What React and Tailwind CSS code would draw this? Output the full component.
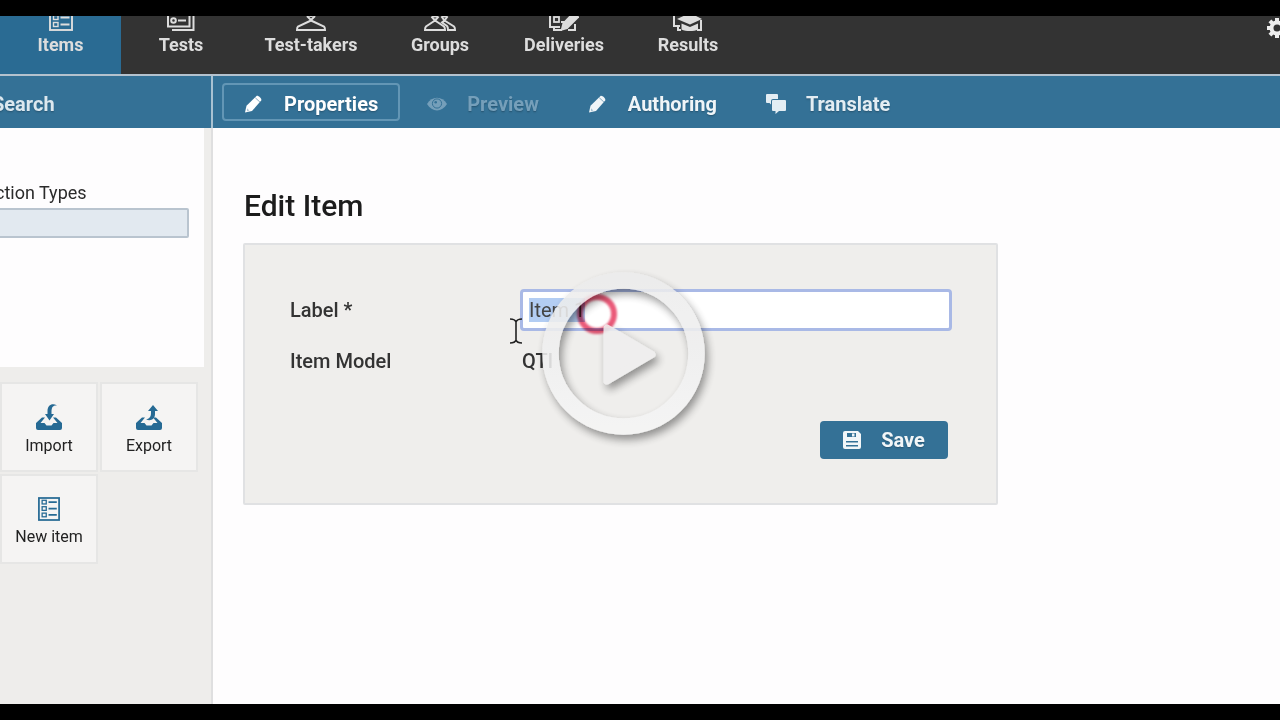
import { useEffect, useRef } from "react";

function ListIcon({ className }) {
  return (
    <svg viewBox="0 0 24 26" className={className} fill="none" stroke="currentColor" strokeWidth="1.900" aria-hidden="true">
      <rect x="1" y="1" width="22" height="24" />
      <rect x="4.500" y="3.500" width="4.500" height="4" strokeWidth="1.400" />
      <rect x="4.500" y="10.500" width="4.500" height="4" strokeWidth="1.400" />
      <rect x="4.500" y="17.500" width="4.500" height="4" strokeWidth="1.400" />
      <path d="M11.500 5.500h9M11.500 12.500h9M11.500 19.500h9" />
    </svg>
  );
}

function TestsIcon({ className }) {
  return (
    <svg viewBox="0 0 28 26" className={className} fill="none" stroke="currentColor" strokeWidth="2" aria-hidden="true">
      <path d="M1 0V21.500H22.500V0ZM5 25H26.500V3" />
      <rect x="4.500" y="3" width="4" height="4" strokeWidth="1.600" />
      <circle cx="6.500" cy="15.500" r="2.300" />
      <path d="M11 5h8M11 15.500h8" />
    </svg>
  );
}

function TakerIcon({ className }) {
  return (
    <svg viewBox="0 0 30 26" className={className} fill="none" stroke="currentColor" strokeWidth="2" aria-hidden="true">
      <circle cx="15" cy="6" r="5" />
      <path d="M11 11l4.500 4.500M19 11l-4.500 4.500" />
      <path d="M15 15.500 2 21.500q-1 1-1 3.500h28q0-2.500-1-3.500L15 15.500" />
    </svg>
  );
}

function GroupsIcon({ className }) {
  return (
    <svg viewBox="0 0 32 26" className={className} fill="none" stroke="currentColor" strokeWidth="2" aria-hidden="true">
      <circle cx="11" cy="7" r="4.500" />
      <path d="M7.500 11.500l3.500 4M14.500 11.500l-3.500 4" />
      <path d="M11 15.500 2 21.500q-1 1-1 3.500h20q0-2.500-1-3.500L11 15.500" />
      <circle cx="20.500" cy="7" r="4.500" />
      <path d="M17.500 11.500l3 4 3-4M20.500 15.500l9.500 6q1 1 1 3.500h-7q0-3-1-4l-5-3.500Z" />
    </svg>
  );
}

function DeliveriesIcon({ className }) {
  return (
    <svg viewBox="0 0 30 26" className={className} fill="none" stroke="currentColor" strokeWidth="2" aria-hidden="true">
      <path d="M1 0V22H11M5 22v3h8M19 25h7v-6" />
      <rect x="5" y="12" width="5" height="5" strokeWidth="1.800" />
      <path d="M12 17h4" />
      <path d="M11.500 26l2-8L25 6l5.500 6L18.500 24Z" fill="currentColor" stroke="none" />
    </svg>
  );
}

function ResultsIcon({ className }) {
  return (
    <svg viewBox="0 0 30 26" className={className} fill="none" stroke="currentColor" strokeWidth="2" aria-hidden="true">
      <path d="M1 0V21H7M5 21v4h3M24 25h4V15" />
      <path d="M4 14 17 8l12 6-12 5.500Z" fill="currentColor" stroke="none" />
      <path d="M8.500 18.500 17 22l8-3.500v6c-4 2-12 2-16.500 0Z" fill="currentColor" stroke="none" />
    </svg>
  );
}

function GearIcon({ className }) {
  return (
    <svg viewBox="0 0 22 22" className={className} aria-hidden="true">
      <g fill="currentColor">
        <path d="M9 1h4v20H9z" />
        <path d="M1 9h20v4H1z" />
        <path d="M9 1h4v20H9z" transform="rotate(45 11 11)" />
        <path d="M1 9h20v4H1z" transform="rotate(45 11 11)" />
        <circle cx="11" cy="11" r="7.500" />
      </g>
      <circle cx="11" cy="11" r="3.500" fill="#333333" />
    </svg>
  );
}

function PencilIcon({ className }) {
  return (
    <svg viewBox="0 0 20 20" className={className} fill="currentColor" aria-hidden="true">
      <path d="M12.500 2c1.500-1 5.700 2.700 4.700 4.400L8 17 1 18.500l1.500-6.700Z" />
      <path d="M11.300 3.800l4.600 4.200" stroke="#347196" strokeWidth="0.600" />
      <path d="M3 14.300l2.300 2.300-2.300.6Z" fill="#347196" opacity="0.400" />
    </svg>
  );
}

function EyeIcon({ className }) {
  return (
    <svg viewBox="0 0 20 14" className={className} aria-hidden="true">
      <path d="M0 7C5-1.500 15-1.500 20 7 15 15.500 5 15.500 0 7Z" fill="currentColor" />
      <circle cx="10" cy="6.500" r="4.600" fill="none" stroke="#347196" strokeWidth="1" />
      <circle cx="8.700" cy="5.200" r="1.300" fill="#347196" />
    </svg>
  );
}

function BubblesIcon({ className }) {
  return (
    <svg viewBox="0 0 20 20" className={className} fill="currentColor" aria-hidden="true">
      <path d="M1 0h10a1 1 0 0 1 1 1v4H7a2 2 0 0 0-2 2v3.500L3.500 9H1a1 1 0 0 1-1-1V1a1 1 0 0 1 1-1Z" />
      <path d="M7 6h12a1 1 0 0 1 1 1v9a1 1 0 0 1-1 1h-6l-3.500 3v-3H7a1 1 0 0 1-1-1V7a1 1 0 0 1 1-1Z" />
    </svg>
  );
}

function SaveIcon({ className }) {
  return (
    <svg viewBox="0 0 18 18" className={className} aria-hidden="true">
      <path d="M2 0h13l3 3v13a2 2 0 0 1-2 2H2a2 2 0 0 1-2-2V2a2 2 0 0 1 2-2Z" fill="currentColor" />
      <path d="M4 2h9v4H4zM3 10h12v1.400H3zM3 14h12v1.600H3z" fill="#347196" />
      <path d="M9 2.500h2.500v3H9z" fill="currentColor" />
    </svg>
  );
}

function Tray() {
  return <path d="M6 13.500 0 19v5a2 2 0 0 0 2 2h22a2 2 0 0 0 2-2v-5L20 13.500h-3l4.500 5.500h-4l-2 2.500h-5L8.500 19h-4L9 13.500Z" />;
}

function ImportIcon({ className }) {
  return (
    <svg viewBox="0 0 26 26" className={className} fill="currentColor" aria-hidden="true">
      <Tray />
      <path d="M21 1.500c-4-.5-5.500 1.500-5.500 6.500v2H18L13.500 16.500 9 10h2.500V7c0-5.500 4.500-8.500 9.500-5.500Z" />
    </svg>
  );
}

function ExportIcon({ className }) {
  return (
    <svg viewBox="0 0 26 26" className={className} fill="currentColor" aria-hidden="true">
      <Tray />
      <path d="M10 15.500c3-.5 5-2.500 5-6.500V7h-3L17 1l5 6h-3v3c0 5-4 7.500-9 5.500Z" />
    </svg>
  );
}

const sections = [
  { name: "Items", Icon: ListIcon, width: "w-[121px]", active: true },
  { name: "Tests", Icon: TestsIcon, width: "w-[120px]" },
  { name: "Test-takers", Icon: TakerIcon, width: "w-[140px]" },
  { name: "Groups", Icon: GroupsIcon, width: "w-[118px]" },
  { name: "Deliveries", Icon: DeliveriesIcon, width: "w-[130px]" },
  { name: "Results", Icon: ResultsIcon, width: "w-[118px]" },
];

const actions = [
  { name: "Properties", Icon: PencilIcon, look: "border-[#6396b5] text-white", size: "size-5" },
  { name: "Preview", Icon: EyeIcon, look: "border-transparent text-[#759fba]", size: "h-[14px] w-5", disabled: true },
  { name: "Authoring", Icon: PencilIcon, look: "border-transparent text-[#f0f5f8]", size: "size-5" },
  { name: "Translate", Icon: BubblesIcon, look: "border-transparent text-[#e3edf3]", size: "size-5" },
];

function TopNav() {
  return (
    <header className="flex h-[58px] shrink-0 justify-between overflow-hidden bg-[#333333] text-[#dddddd]">
      <nav className="flex">
        {sections.map(({ name, Icon, width, active }) => (
          <a
            key={name}
            href="#"
            className={`flex shrink-0 flex-col items-center justify-end gap-0.5 pb-[17px] text-lg leading-6 font-bold ${width} ${active ? "bg-[#2a6b93]" : ""}`}
          >
            <Icon className="h-[26px] shrink-0" />
            {name}
          </a>
        ))}
      </nav>
      <button type="button" aria-label="Settings" className="-mr-2 flex pt-px text-[#eeeeee]">
        <GearIcon className="size-[22px]" />
      </button>
    </header>
  );
}

function Toolbar() {
  return (
    <div className="flex h-[54px] shrink-0 border-t-2 border-[#b4c2ce] bg-[#347196] text-xl font-bold">
      <div className="flex w-[213px] shrink-0 items-center overflow-hidden border-r-2 border-[#a9c2d2]">
        <button type="button" className="-ml-2 pt-[3px] text-[#dce8ef] text-shadow-sm">Search</button>
      </div>
      <div className="flex items-center gap-[5px] pl-[9px]">
        {actions.map(({ name, Icon, look, size, disabled }) => (
          <button
            key={name}
            type="button"
            disabled={disabled}
            className={`flex h-[38px] items-center gap-5 rounded-sm border-2 px-5 pt-[3px] text-shadow-sm ${look}`}
          >
            <Icon className={size} />
            {name}
          </button>
        ))}
      </div>
    </div>
  );
}

function Tile({ name, Icon, size }) {
  return (
    <button
      type="button"
      className="flex h-[90px] flex-col items-center justify-center gap-1 border-2 border-[#e6e6e5] bg-[#f5f4f3] pt-2 text-base text-[#222222]"
    >
      <Icon className={`text-[#266a94] ${size}`} />
      {name}
    </button>
  );
}

function Sidebar() {
  return (
    <aside className="w-[213px] shrink-0 overflow-hidden border-r-2 border-[#dfdfe0] bg-[#eeedeb]">
      <div className="mr-[7px] h-[239px] bg-[#fefdfe] pt-[53px] pr-[15px]">
        <label htmlFor="types" className="-ml-[5px] block text-lg leading-6 text-[#2b2b2b]">ction Types</label>
        <input
          id="types"
          className="-ml-2 mt-[3px] h-[30px] w-[197px] rounded-xs border-2 border-[#b9c4cf] bg-[#e2e9f0]"
        />
      </div>
      <div className="grid grid-cols-[98px_98px] gap-[2px] pt-[15px]">
        <Tile name="Import" Icon={ImportIcon} size="size-[26px]" />
        <Tile name="Export" Icon={ExportIcon} size="size-[26px]" />
        <Tile name="New item" Icon={ListIcon} size="h-6 w-[22px]" />
      </div>
    </aside>
  );
}

function EditForm() {
  const field = useRef(null);
  useEffect(() => {
    field.current.focus();
    field.current.select();
  }, []);

  return (
    <main className="flex-1 bg-[#fefdfe] pt-[58px] pl-[30px]">
      <h1 className="pl-px text-3xl leading-10 font-medium text-[#1c1c1c]">Edit Item</h1>
      <form className="mt-[17px] grid w-[755px] max-w-full grid-cols-[230px_1fr] items-center rounded-xs border-2 border-[#e0e1e3] bg-[#efeeec] pt-11 pr-11 pb-11 pl-[45px] text-xl text-[#333333]">
        <label htmlFor="label" className="font-medium">Label *</label>
        <input
          id="label"
          ref={field}
          defaultValue="Item 1"
          className="h-[42px] rounded-sm border-3 border-[#a9b9e6] bg-white px-1.5 outline-none selection:bg-[#b3cdf3] selection:text-[#444444]"
        />
        <span className="pt-4 font-medium">Item Model</span>
        <span className="pt-4 pl-0.5 font-medium">QTI</span>
        <div className="col-span-2 mt-[46px] flex justify-end pr-1">
          <button type="button" className="flex h-[38px] w-32 items-center justify-center gap-5 rounded-sm bg-[#347196] font-bold text-[#f2f6f8] text-shadow-sm">
            <SaveIcon className="size-[18px]" />
            Save
          </button>
        </div>
      </form>
    </main>
  );
}

function ClickMark() {
  return (
    <span className="pointer-events-none absolute top-[294px] left-[577px] size-10 rounded-full border-6 border-[#e8486a] opacity-90 mix-blend-multiply blur-[1px]" />
  );
}

function PlayOverlay() {
  return (
    <button type="button" aria-label="Play" className="absolute top-[254px] left-[504px]">
      <svg viewBox="504 254 220 200" className="h-[200px] w-[220px]" aria-hidden="true">
        <defs>
          <filter id="drop" x="-20%" y="-20%" width="150%" height="150%">
            <feDropShadow dx="3" dy="5" stdDeviation="4" floodColor="#000000" floodOpacity="0.450" />
          </filter>
          <linearGradient id="gloss" x1="0" y1="0" x2="0" y2="1">
            <stop offset="0" stopColor="#ececec" />
            <stop offset="1" stopColor="#f5f5f5" />
          </linearGradient>
        </defs>
        <path d="M510 319q5 0 6 3 1-3 6-3M516 322v18M510 343q5 0 6-3 1 3 6 3" fill="none" stroke="#222222" strokeWidth="1.600" />
        <g filter="url(#drop)" opacity="0.880">
          <circle cx="623.500" cy="353.500" r="73" fill="none" stroke="url(#gloss)" strokeWidth="16.500" />
          <path d="M607 328v53l45-26.500Z" fill="#efefef" stroke="#efefef" strokeWidth="7" strokeLinejoin="round" />
        </g>
      </svg>
    </button>
  );
}

export default function App() {
  return (
    <div className="relative flex min-h-screen flex-col overflow-hidden bg-black py-4 font-[Roboto,'Liberation_Sans',sans-serif]">
      <TopNav />
      <Toolbar />
      <div className="flex flex-1">
        <Sidebar />
        <EditForm />
      </div>
      <ClickMark />
      <PlayOverlay />
    </div>
  );
}
